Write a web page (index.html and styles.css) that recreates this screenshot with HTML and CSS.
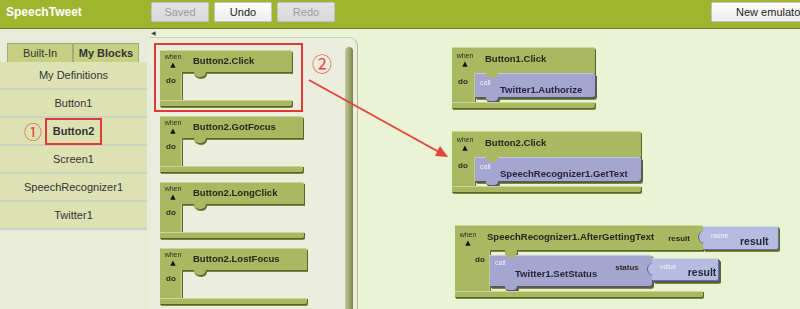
FILE: index.html
```html
<!DOCTYPE html>
<html lang="en">

<head>
    <meta charset="UTF-8">
    <meta name="viewport" content="width=device-width, initial-scale=1.0">
    <title>SpeechTweet - Blocks Editor</title>
    <link rel="stylesheet" href="styles.css">
</head>

<body>
    <div class="topbar">
        <div class="brand">SpeechTweet</div>
        <div class="actions">
            <button class="btn btn-off">Saved</button>
            <button class="btn">Undo</button>
            <button class="btn btn-off">Redo</button>
        </div>
        <button class="btn btn-emulator">New emulator</button>
    </div>

    <div class="main">
        <!-- Drawer list -->
        <div class="sidebar">
            <div class="tabs">
                <div class="tab">Built-In</div>
                <div class="tab tab-active">My Blocks</div>
            </div>
            <ul class="drawer-list">
                <li>My Definitions</li>
                <li>Button1</li>
                <li class="picked"><span class="mark">①</span><span class="picked-name">Button2</span></li>
                <li>Screen1</li>
                <li>SpeechRecognizer1</li>
                <li>Twitter1</li>
            </ul>
        </div>

        <!-- Open drawer with Button2 events -->
        <div class="drawer-col">
            <div class="drawer-toggle">◀</div>
            <div class="drawer">
                <div class="palette">
                    <div class="block">
                        <div class="block-head">
                            <div class="when"><span>when</span><span class="caret">▲</span></div>
                            <span class="block-title">Button2.Click</span>
                        </div>
                        <div class="block-body">
                            <div class="spine"><span class="do">do</span></div>
                            <div class="slot"></div>
                        </div>
                        <div class="block-foot"></div>
                    </div>
                    <div class="block">
                        <div class="block-head">
                            <div class="when"><span>when</span><span class="caret">▲</span></div>
                            <span class="block-title">Button2.GotFocus</span>
                        </div>
                        <div class="block-body">
                            <div class="spine"><span class="do">do</span></div>
                            <div class="slot"></div>
                        </div>
                        <div class="block-foot"></div>
                    </div>
                    <div class="block">
                        <div class="block-head">
                            <div class="when"><span>when</span><span class="caret">▲</span></div>
                            <span class="block-title">Button2.LongClick</span>
                        </div>
                        <div class="block-body">
                            <div class="spine"><span class="do">do</span></div>
                            <div class="slot"></div>
                        </div>
                        <div class="block-foot"></div>
                    </div>
                    <div class="block">
                        <div class="block-head">
                            <div class="when"><span>when</span><span class="caret">▲</span></div>
                            <span class="block-title">Button2.LostFocus</span>
                        </div>
                        <div class="block-body">
                            <div class="spine"><span class="do">do</span></div>
                            <div class="slot"></div>
                        </div>
                        <div class="block-foot"></div>
                    </div>
                </div>
                <div class="scrollbar"></div>
            </div>
        </div>

        <!-- Workspace -->
        <div class="workspace">
            <div class="block ws-one">
                <div class="block-head">
                    <div class="when"><span>when</span><span class="caret">▲</span></div>
                    <span class="block-title">Button1.Click</span>
                </div>
                <div class="block-body">
                    <div class="spine"><span class="do">do</span></div>
                    <div class="slot">
                        <div class="call">
                            <span class="call-label">call</span>
                            <span class="call-title">Twitter1.Authorize</span>
                        </div>
                    </div>
                </div>
                <div class="block-foot"></div>
            </div>

            <div class="block ws-two">
                <div class="block-head">
                    <div class="when"><span>when</span><span class="caret">▲</span></div>
                    <span class="block-title">Button2.Click</span>
                </div>
                <div class="block-body">
                    <div class="spine"><span class="do">do</span></div>
                    <div class="slot">
                        <div class="call">
                            <span class="call-label">call</span>
                            <span class="call-title">SpeechRecognizer1.GetText</span>
                        </div>
                    </div>
                </div>
                <div class="block-foot"></div>
            </div>

            <div class="block ws-three">
                <div class="block-head">
                    <div class="when"><span>when</span><span class="caret">▲</span></div>
                    <span class="block-title">SpeechRecognizer1.AfterGettingText</span>
                    <span class="arg-label">result</span>
                    <div class="value">
                        <span class="value-label">name</span>
                        <span class="value-text">result</span>
                    </div>
                </div>
                <div class="block-body">
                    <div class="spine"><span class="do">do</span></div>
                    <div class="slot">
                        <div class="call call-tall">
                            <span class="call-label">call</span>
                            <span class="call-title">Twitter1.SetStatus</span>
                            <span class="arg-label">status</span>
                            <div class="value value-small">
                                <span class="value-label">value</span>
                                <span class="value-text">result</span>
                            </div>
                        </div>
                    </div>
                </div>
                <div class="block-foot"></div>
            </div>
        </div>
    </div>

    <!-- Annotations -->
    <div class="note-box"></div>
    <div class="note-num">②</div>
    <svg class="note-arrow" viewBox="0 0 800 309">
        <line x1="309" y1="80" x2="439" y2="152" />
        <polygon points="448,157 435,156 440,146" />
    </svg>
</body>

</html>
```

FILE: styles.css
```css
body {
    margin: 0;
    width: 800px;
    height: 309px;
    overflow: hidden;
    position: relative;
    font-family: "Liberation Sans", Arial, "DejaVu Sans", sans-serif;
    color: #2a2a22;
    background-color: #eaf4d5;
}

/* top bar */
.topbar {
    display: flex;
    align-items: flex-start;
    height: 28px;
    background-color: #9fb42f;
    border-bottom: 1px solid #6e7a2e;
}

.brand {
    width: 151px;
    box-sizing: border-box;
    padding: 5px 0 0 6px;
    font-size: 12px;
    font-weight: bold;
    color: #fff;
}

.actions {
    display: flex;
    gap: 5px;
    margin-top: 2px;
}

.btn {
    width: 58px;
    height: 20px;
    padding: 0;
    font-family: inherit;
    font-size: 11px;
    color: #222;
    background: linear-gradient(#ffffff, #ececec);
    border: 1px solid #c2c2c2;
    border-radius: 1px;
}

.btn-off {
    color: #9c9c9c;
    background: linear-gradient(#e4e4e4, #d8d8d8);
}

.btn-emulator {
    width: 118px;
    margin: 2px -29px 0 auto;
}

/* layout */
.main {
    display: flex;
    height: 280px;
}

.sidebar {
    width: 150px;
    padding-top: 14px;
    box-sizing: border-box;
    background-color: #e9ecd9;
}

.tabs {
    display: flex;
    padding-left: 7px;
}

.tab {
    width: 66px;
    height: 19px;
    box-sizing: border-box;
    border: 1px solid #a3a97c;
    border-bottom: none;
    background-color: #c5d181;
    font-size: 11px;
    line-height: 18px;
    text-align: center;
    color: #333;
}

.tab-active {
    font-weight: bold;
}

.drawer-list {
    list-style: none;
    margin: 0;
    padding: 0;
    width: 147px;
}

.drawer-list li {
    position: relative;
    display: flex;
    align-items: center;
    justify-content: center;
    height: 26px;
    border-bottom: 2px solid #cfd0c9;
    background-color: #dde2b3;
    font-size: 11px;
    color: #333;
}

.picked-name {
    padding: 5px 6px;
    border: 2px solid #e03a33;
    font-weight: bold;
    line-height: 13px;
}

.mark {
    position: absolute;
    left: 24px;
    top: 3px;
    font-family: "Noto Sans CJK JP", "DejaVu Sans", sans-serif;
    font-size: 18px;
    line-height: 20px;
    color: #e5463d;
}

/* drawer */
.drawer-col {
    display: flex;
    flex-direction: column;
    width: 208px;
}

.drawer-toggle {
    height: 8px;
    padding-left: 1px;
    font-size: 6px;
    line-height: 8px;
    color: #444;
}

.drawer {
    flex: 1;
    display: flex;
    background-color: #ebeedc;
    border-top: 1px solid #c9cbbb;
    border-right: 1px solid #b4b6a8;
    border-top-right-radius: 9px;
}

.palette {
    flex: 1;
    display: flex;
    flex-direction: column;
    align-items: flex-start;
    gap: 10px;
    padding: 12px 0 0 10px;
}

.scrollbar {
    width: 8px;
    margin: 9px 4px 0 0;
    border-radius: 4px 4px 0 0;
    background: linear-gradient(90deg, #c3c89d, #9aa46a 60%, #77823f);
}

.workspace {
    flex: 1;
    position: relative;
}

/* event blocks */
.block {
    position: relative;
    display: flex;
    flex-direction: column;
    width: max-content;
    min-width: 132px;
    filter: drop-shadow(1px 1px 0 #59642b) drop-shadow(0 1px 0 #7c8740);
}

.block-head {
    position: relative;
    display: flex;
    align-items: flex-start;
    gap: 10px;
    height: 22px;
    box-sizing: border-box;
    padding: 3px 27px 0 3px;
    background-color: #aab862;
    border-radius: 0 3px 0 0;
    box-shadow: inset 0 1px 0 #cdd597;
}

.when {
    display: flex;
    flex-direction: column;
    align-items: center;
    width: 20px;
    font-size: 7px;
    line-height: 8px;
    color: #2d2d20;
}

.caret {
    font-family: "DejaVu Sans", sans-serif;
    font-size: 7px;
    line-height: 8px;
    color: #111;
}

.block-title {
    margin-top: 2px;
    font-size: 9.5px;
    font-weight: bold;
    line-height: 12px;
    color: #26261a;
}

.block-body {
    display: flex;
}

.spine {
    width: 22px;
    box-sizing: border-box;
    padding: 5px 0 0 6px;
    background-color: #aab862;
    box-shadow: inset -1px 0 0 #c3cc88;
}

.do {
    display: block;
    font-size: 8px;
    font-weight: bold;
    line-height: 8px;
    color: #2d2d20;
}

.slot {
    position: relative;
    flex: 1;
    min-height: 28px;
}

.slot::before {
    content: "";
    position: absolute;
    z-index: 1;
    left: 12px;
    top: 0;
    width: 12px;
    height: 5px;
    background-color: #aab862;
    border-radius: 0 0 6px 6px;
}

.block-foot {
    height: 6px;
    background-color: #aab862;
    border-radius: 0 0 2px 0;
    box-shadow: inset 0 1px 0 #cdd597;
}

/* workspace blocks */
.workspace .block {
    position: absolute;
    min-width: 134px;
}

.workspace .block-head {
    height: 26px;
    padding-top: 5px;
}

.workspace .block-title {
    margin-top: 1px;
}

.workspace .spine {
    width: 23px;
}

.workspace .slot {
    min-height: 29px;
}

.workspace .slot::before {
    left: 11px;
}

.ws-one {
    left: 94px;
    top: 18px;
}

.ws-two {
    left: 94px;
    top: 102px;
}

.ws-three {
    left: 97px;
    top: 196px;
}

.ws-three .block-head {
    height: 25px;
    gap: 9px;
    padding: 6px 13px 0 3px;
}

.ws-three .block-title {
    margin-top: 0;
}

.ws-three .spine {
    width: 35px;
    padding: 6px 0 0 20px;
}

.ws-three .slot {
    min-height: 41px;
    padding-top: 5px;
    box-sizing: border-box;
}

.ws-three .slot::before {
    left: 15px;
    height: 8px;
}

.arg-label {
    margin: 3px 0 0 5px;
    font-size: 8px;
    font-weight: bold;
    color: #2d2d20;
}

/* procedure call blocks */
.call {
    position: relative;
    display: flex;
    align-items: flex-start;
    width: max-content;
    height: 24px;
    box-sizing: border-box;
    padding: 6px 13px 0 5px;
    background-color: #a5a5d0;
    border-radius: 0 3px 3px 0;
    box-shadow: inset 0 1px 0 #c6c6e4;
    filter: drop-shadow(1px 1px 0 #52527a);
}

.call::after {
    content: "";
    position: absolute;
    left: 11px;
    bottom: -4px;
    width: 12px;
    height: 4px;
    background-color: #a5a5d0;
    border-radius: 0 0 6px 6px;
}

.call-label {
    width: 20px;
    font-size: 7px;
    line-height: 7px;
    color: #f2f2fa;
}

.call-title {
    margin-top: 5px;
    font-size: 9.5px;
    font-weight: bold;
    line-height: 12px;
    color: #24243a;
}

.call-tall {
    height: 31px;
    padding-top: 4px;
}

.call-tall .call-title {
    margin-top: 9px;
}

.call-tall .arg-label {
    margin: 4px 0 0 18px;
}

.call-tall::after {
    left: 15px;
}

/* value blocks plugged into sockets */
.value {
    position: absolute;
    left: 100%;
    top: 1px;
    display: flex;
    align-items: flex-start;
    width: 75px;
    height: 23px;
    box-sizing: border-box;
    padding: 6px 0 0 8px;
    background-color: #b5bce0;
    border-radius: 0 2px 2px 0;
    box-shadow: inset 0 1px 0 #d4d8f0;
    filter: drop-shadow(1px 1px 0 #6a7096);
}

.value::before {
    content: "";
    position: absolute;
    left: -5px;
    top: 5px;
    width: 5px;
    height: 12px;
    background-color: #b5bce0;
    border-left: 1px solid #5d6088;
    border-radius: 6px 0 0 6px;
}

.value-label {
    width: 29px;
    font-size: 7px;
    line-height: 7px;
    color: #f4f4fb;
}

.value-text {
    margin-top: 3px;
    font-size: 10.5px;
    font-weight: bold;
    line-height: 12px;
    color: #24243a;
}

.value-small {
    top: 3px;
    width: 66px;
    height: 22px;
    padding-top: 5px;
}

.value-small .value-label {
    width: 28px;
}

/* annotations */
.note-box {
    position: absolute;
    left: 154px;
    top: 43px;
    width: 149px;
    height: 69px;
    box-sizing: border-box;
    border: 2px solid #e03a33;
}

.note-num {
    position: absolute;
    left: 312px;
    top: 53px;
    font-family: "Noto Sans CJK JP", "DejaVu Sans", sans-serif;
    font-size: 20px;
    line-height: 22px;
    color: #e5463d;
}

.note-arrow {
    position: absolute;
    left: 0;
    top: 0;
    width: 800px;
    height: 309px;
    pointer-events: none;
}

.note-arrow line {
    stroke: #e2453c;
    stroke-width: 2;
}

.note-arrow polygon {
    fill: #e2453c;
}
```
